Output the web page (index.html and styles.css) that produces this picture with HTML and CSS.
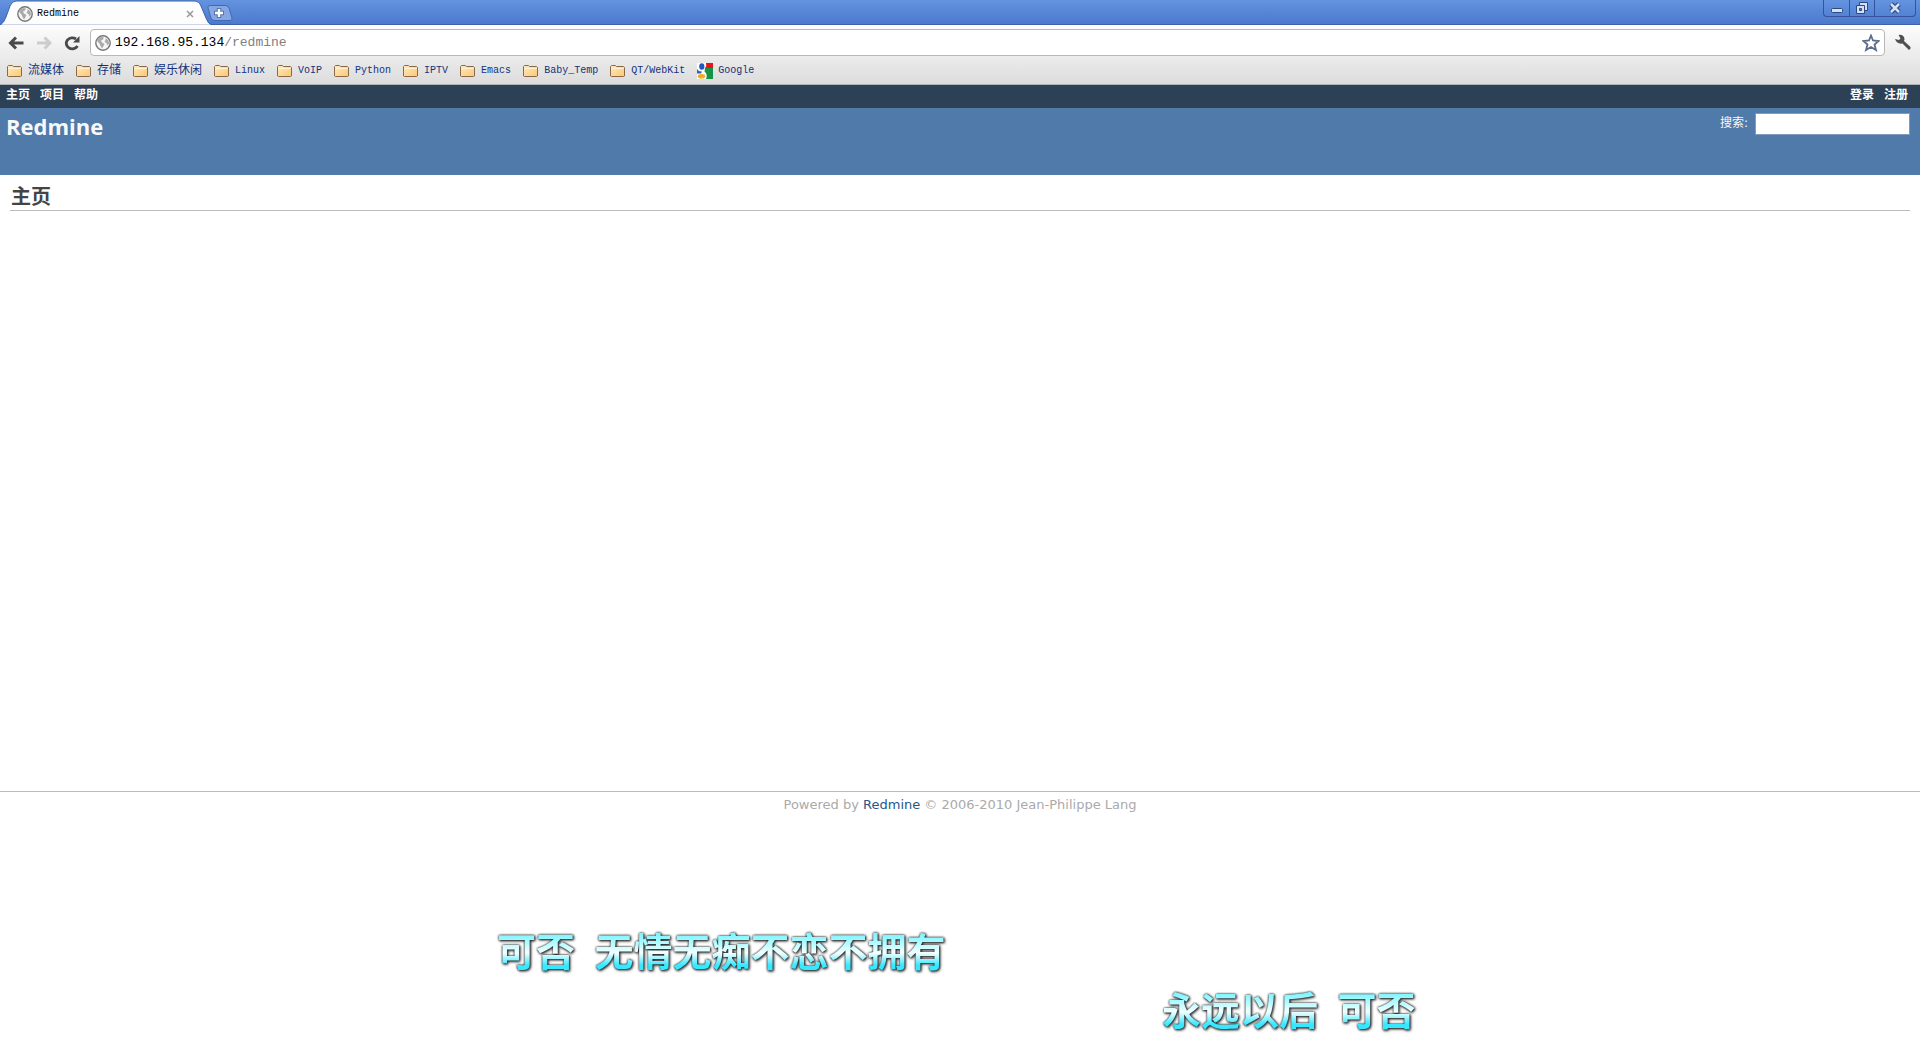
FILE: index.html
```html
<!DOCTYPE html>
<html lang="zh-CN">
<head>
<meta charset="utf-8">
<title>Redmine</title>
<link rel="stylesheet" href="styles.css">
</head>
<body>
<svg class="defs" width="0" height="0" aria-hidden="true">
  <defs>
    <linearGradient id="folder-fill" x1="0" y1="0" x2="1" y2="1"><stop offset="0" stop-color="#ffeac0"/><stop offset="1" stop-color="#fbc873"/></linearGradient>
    <symbol id="folder" viewBox="0 0 15 14">
      <path d="M.5 12V2.500L1.500 1.500H5.500L6.500 2.500H13.500L14.500 3.500V12L13.500 12.500H1.500Z" fill="url(#folder-fill)" stroke="#8a6848"/>
      <path d="M1.500 4.500H13.500" stroke="#fff3d6"/>
    </symbol>
    <symbol id="globe" viewBox="0 0 16 16">
      <circle cx="8" cy="8" r="7.200" fill="#f6f6f6" stroke="#777" stroke-width="1.400"/>
      <path d="M2 6Q3 3 6 2L9 2.500L8 4.500L6 5.500L7 7.500L9.500 9L8.500 11L7 13.500L5.500 11L4.500 8.500ZM10.500 3L13.500 5.500L14 8.500L12.500 10.500L11.500 8L9.500 7L10.500 5Z" fill="#aaa"/>
    </symbol>
  </defs>
</svg>
<header class="browser">
  <div class="tabstrip">
    <div class="tab">
      <svg class="tab-shape" viewBox="0 0 212 25" aria-hidden="true"><path d="M0 25Q4 23 6 17L10 6Q12 1 16 1H194Q199 1 201 6L206 18Q208 24 212 25Z" fill="#fdfdfd" stroke="#3d62a8"/><path d="M2 25H210" stroke="#fdfdfd"/></svg>
      <svg class="globe"><use href="#globe"/></svg>
      <span class="tab-title">Redmine</span>
      <button class="tab-close" aria-label="关闭标签页"><svg width="8" height="8" viewBox="0 0 8 8"><path d="M1 1L7 7M7 1L1 7" stroke="#999" stroke-width="1.500"/></svg></button>
    </div>
    <button class="new-tab" aria-label="新标签页"><svg width="26" height="16" viewBox="0 0 26 16"><path d="M3 .5H18Q21 .5 22 3L25 13Q25.500 15.500 23 15.500H8Q5 15.500 4 13L1 3Q.5 .5 3 .5Z" fill="#86a8e2" stroke="#4169b5"/><path d="M12 3V13M7 8H17" stroke="#5674ad" stroke-width="4.500"/><path d="M12 4V12M8 8H16" stroke="#fff" stroke-width="2.400"/></svg></button>
    <div class="window-controls">
      <button class="win" aria-label="最小化"><svg width="14" height="14" viewBox="0 0 14 14"><rect x="1.500" y="7.500" width="11" height="4" rx="1" fill="#d3e0f8" stroke="#2d4981"/></svg></button>
      <button class="win" aria-label="还原"><svg width="14" height="14" viewBox="0 0 14 14"><path d="M4.500 1.500H12.500V9.500H4.500Z" fill="#d3e0f8" stroke="#2d4981"/><path d="M1.500 4.500H9.500V12.500H1.500Z" fill="#d3e0f8" stroke="#2d4981"/><path d="M4.500 7.500H6.500V9.500H4.500Z" fill="#587fca" stroke="#2d4981"/></svg></button>
      <button class="win win-close" aria-label="关闭"><svg width="14" height="12" viewBox="0 0 14 12"><path d="M3 2L11 10M11 2L3 10" stroke="#2d4981" stroke-width="5"/><path d="M3 2L11 10M11 2L3 10" stroke="#d3e0f8" stroke-width="2.500"/></svg></button>
    </div>
  </div>
  <div class="chrome">
    <div class="toolbar">
      <button class="tool" aria-label="后退"><svg width="16" height="16" viewBox="0 0 16 16"><path d="M8 2.500L2.500 8L8 13.500M3 8H15.500" fill="none" stroke="#4a4a4a" stroke-width="3"/></svg></button>
      <button class="tool" aria-label="前进"><svg width="16" height="16" viewBox="0 0 16 16"><path d="M8.500 2.500L14 8L8.500 13.500M13.500 8H1" fill="none" stroke="#ccc" stroke-width="3"/></svg></button>
      <button class="tool" aria-label="重新加载"><svg width="16" height="16" viewBox="0 0 16 16"><path d="M13.500 11A6 5.500 0 1 1 12 4" fill="none" stroke="#4a4a4a" stroke-width="2.800"/><path d="M15.500 1V7.500H9Z" fill="#4a4a4a"/></svg></button>
      <label class="omnibox">
        <svg class="globe"><use href="#globe"/></svg>
        <span class="url" role="textbox" aria-label="地址">192.168.95.134<span class="path">/redmine</span></span>
        <svg width="18" height="18" viewBox="0 0 18 18"><path d="M9 1.500L11 6.500L16.500 7L12.500 10.500L14 16L9 13L4 16L5.500 10.500L1.500 7L7 6.500Z" fill="#fff" stroke="#5d6b8c" stroke-width="1.800"/></svg>
      </label>
      <button class="tool wrench" aria-label="设置"><svg width="18" height="18" viewBox="0 0 18 18"><path d="M1 5L5 6L6.500 4.500L4.500 1Q8 0 10 3Q11 5 10 7L16.500 13Q17 15 15 16L8.500 9.500Q3 10.500 1 5Z" fill="#505050"/></svg></button>
    </div>
    <nav class="bookmarks" aria-label="书签">
      <a href="#"><svg class="folder"><use href="#folder"/></svg><span class="zh">流媒体</span></a>
      <a href="#"><svg class="folder"><use href="#folder"/></svg><span class="zh">存储</span></a>
      <a href="#"><svg class="folder"><use href="#folder"/></svg><span class="zh">娱乐休闲</span></a>
      <a href="#"><svg class="folder"><use href="#folder"/></svg>Linux</a>
      <a href="#"><svg class="folder"><use href="#folder"/></svg>VoIP</a>
      <a href="#"><svg class="folder"><use href="#folder"/></svg>Python</a>
      <a href="#"><svg class="folder"><use href="#folder"/></svg>IPTV</a>
      <a href="#"><svg class="folder"><use href="#folder"/></svg>Emacs</a>
      <a href="#"><svg class="folder"><use href="#folder"/></svg>Baby_Temp</a>
      <a href="#"><svg class="folder"><use href="#folder"/></svg>QT/WebKit</a>
      <a href="#"><svg width="16" height="16" viewBox="0 0 16 16"><path d="M0 0H16V16H0Z" fill="#fff"/><path d="M9 0H16V5H8Q10 3 9 0Z" fill="#e8141c"/><path d="M8 5H16V16H9Q11 11 7.500 8.500Z" fill="#149444"/><path d="M0 6Q2 9 5 8.500L4 10.500H0Z" fill="#2a62c8"/><ellipse cx="4.800" cy="3.500" rx="2.600" ry="3.300" fill="#2158bd"/><ellipse cx="4.500" cy="13.300" rx="3.700" ry="2.300" fill="#f0ae18"/></svg>Google</a>
    </nav>
  </div>
</header>

<div class="top-menu">
  <nav><a href="#">主页</a><a href="#">项目</a><a href="#">帮助</a></nav>
  <nav><a href="#">登录</a><a href="#">注册</a></nav>
</div>
<div class="header">
  <h1>Redmine</h1>
  <form class="search"><label for="q">搜索:</label><input id="q" type="text"></form>
</div>
<main class="content"><h2>主页</h2></main>
<footer class="footer">Powered by <a href="#">Redmine</a> © 2006-2010 Jean-Philippe Lang</footer>

<div class="lyric lyric-first">可否&ensp;无情无痴不恋不拥有</div>
<div class="lyric lyric-second">永远以后&ensp;可否</div>
</body>
</html>
```
FILE: styles.css
```css
* { box-sizing: border-box; }

body {
  margin: 0;
  min-height: 100vh;
  position: relative;
  background: #fff;
  font: 12px/16px "DejaVu Sans", "Noto Sans CJK SC", sans-serif;
  color: #484848;
}

a { text-decoration: none; }
button { padding: 0; border: 0; background: none; display: grid; place-items: center; }
svg { display: block; flex: none; }
.defs { position: absolute; }

/* browser window */
.browser { font: 10px/16px "Liberation Mono", "Noto Sans CJK SC", monospace; }

.tabstrip {
  display: flex;
  height: 25px;
  background: linear-gradient(#6493e0, #4c79cd);
  border-bottom: 1px solid #3d62a8;
}

.tab {
  position: relative;
  display: flex;
  align-items: center;
  gap: 4px;
  width: 207px;
  height: 25px;
  padding: 2px 12px 0 17px;
  color: #000;
}
.tab-shape { position: absolute; left: 0; top: 0; width: 212px; height: 25px; }
.tab > :not(.tab-shape) { position: relative; }
.tab > .tab-shape { position: absolute; }
.tab-title { flex: 1; }
.globe { width: 16px; height: 16px; }
.tab-close { width: 10px; height: 10px; }
.new-tab { height: 25px; }

.window-controls {
  display: flex;
  height: 17px;
  margin: 0 4px 0 auto;
  border: 1px solid #34539a;
  border-top: 0;
  border-radius: 0 0 4px 4px;
}
.win { width: 25px; height: 16px; }
.win + .win { border-left: 1px solid #34539a; }
.win-close { width: 41px; }

.chrome {
  background: linear-gradient(#fdfdfd, #dcdcdc);
  border-bottom: 1px solid #b2b2b2;
}

.toolbar {
  display: flex;
  align-items: center;
  gap: 12px;
  padding: 4px 8px 0;
}
.tool { width: 16px; height: 26px; }
.wrench { width: 18px; }

.omnibox {
  flex: 1;
  display: flex;
  align-items: center;
  gap: 4px;
  height: 27px;
  margin-left: -2px;
  margin-right: -3px;
  padding: 0 4px;
  background: #fff;
  border: 1px solid #b8b8b8;
  border-radius: 4px;
}
.url { flex: 1; font-size: 13px; color: #000; }
.path { color: #808080; }

.bookmarks {
  display: flex;
  gap: 12px;
  height: 28px;
  padding: 1px 7px 0;
}
.bookmarks a { display: flex; align-items: center; gap: 6px; color: #15317a; }
.bookmarks a:last-child { gap: 5px; }
.folder { width: 15px; height: 14px; }
.zh { font-size: 12px; }

/* Redmine page */
.top-menu {
  display: flex;
  justify-content: space-between;
  height: 23px;
  padding: 2px 12px 0 6px;
  background: #2c4056;
  font-weight: bold;
}
.top-menu nav { display: flex; gap: 10px; }
.top-menu a { color: #fff; }

.header {
  display: flex;
  justify-content: space-between;
  height: 67px;
  padding: 4px 10px 0 6px;
  background: #507aaa;
  color: #f8f8f8;
}
h1 { margin: 0; font: bold 22px/28px "Open Sans", sans-serif; }
.search { display: flex; align-items: flex-start; gap: 7px; }
.search label { padding-top: 3px; }
.search input {
  width: 155px;
  height: 22px;
  margin-top: 1px;
  border: 1px solid #7f9db9;
  background: #fff;
}

.content { min-height: 616px; padding: 8px 10px; }
h2 {
  margin: 0;
  padding: 0 0 1px 1px;
  border-bottom: 1px solid #bbb;
  font: bold 20px/26px "Noto Sans CJK SC", sans-serif;
  color: #444;
}

.footer {
  padding: 5px;
  border-top: 1px solid #bbb;
  text-align: center;
  font-size: 13px;
  color: #aaa;
}
.footer a { color: #2a5685; }

/* desktop lyrics floating over the window */
.lyric {
  position: absolute;
  font: bold 39px/48px "Noto Sans CJK SC", sans-serif;
  white-space: nowrap;
  color: transparent;
  background: linear-gradient(#7ff4ff 20%, #a8faff 35%, #f4ffff 58%, #35e8ff 84%);
  background-clip: text;
  -webkit-background-clip: text;
  filter: drop-shadow(0 0 1px #222) drop-shadow(1px 1px 1px #333);
}
.lyric-first { left: 497px; top: 925px; }
.lyric-second { left: 1162px; top: 984px; }
```
